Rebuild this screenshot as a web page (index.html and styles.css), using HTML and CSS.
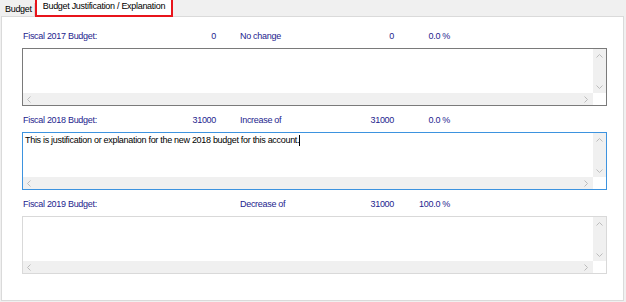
FILE: index.html
```html
<!DOCTYPE html>
<html lang="en">
<head>
  <meta charset="UTF-8" />
  <title>Budget Justification</title>
  <link rel="stylesheet" href="styles.css">
</head>
<body>
  <div class="tabs">
    <div class="tab">Budget</div>
    <div class="tab active">Budget Justification / Explanation</div>
  </div>

  <div class="panel">
    <div class="group">
      <div class="figures">
        <span>Fiscal 2017 Budget:</span>
        <span class="num">0</span>
        <span class="change">No change</span>
        <span class="num">0</span>
        <span class="num">0.0 %</span>
      </div>
      <div class="memo hover">
        <div class="memo-text"></div>
        <div class="vscroll">
          <svg width="7" height="4" viewBox="0 0 7 4"><path d="M0.5 3.5 L3.5 0.5 L6.5 3.5" fill="none" stroke="#bcbcbc"/></svg>
          <svg width="7" height="4" viewBox="0 0 7 4"><path d="M0.5 0.5 L3.5 3.5 L6.5 0.5" fill="none" stroke="#bcbcbc"/></svg>
        </div>
        <div class="hscroll">
          <svg width="4" height="7" viewBox="0 0 4 7"><path d="M3.5 0.5 L0.5 3.5 L3.5 6.5" fill="none" stroke="#bcbcbc"/></svg>
          <svg width="4" height="7" viewBox="0 0 4 7"><path d="M0.5 0.5 L3.5 3.5 L0.5 6.5" fill="none" stroke="#bcbcbc"/></svg>
        </div>
        <div class="corner"></div>
      </div>
    </div>

    <div class="group">
      <div class="figures">
        <span>Fiscal 2018 Budget:</span>
        <span class="num">31000</span>
        <span class="change">Increase of</span>
        <span class="num">31000</span>
        <span class="num">0.0 %</span>
      </div>
      <div class="memo focus">
        <div class="memo-text">This is justification or explanation for the new 2018 budget for this account.<span class="caret"></span></div>
        <div class="vscroll">
          <svg width="7" height="4" viewBox="0 0 7 4"><path d="M0.5 3.5 L3.5 0.5 L6.5 3.5" fill="none" stroke="#bcbcbc"/></svg>
          <svg width="7" height="4" viewBox="0 0 7 4"><path d="M0.5 0.5 L3.5 3.5 L6.5 0.5" fill="none" stroke="#bcbcbc"/></svg>
        </div>
        <div class="hscroll">
          <svg width="4" height="7" viewBox="0 0 4 7"><path d="M3.5 0.5 L0.5 3.5 L3.5 6.5" fill="none" stroke="#bcbcbc"/></svg>
          <svg width="4" height="7" viewBox="0 0 4 7"><path d="M0.5 0.5 L3.5 3.5 L0.5 6.5" fill="none" stroke="#bcbcbc"/></svg>
        </div>
        <div class="corner"></div>
      </div>
    </div>

    <div class="group">
      <div class="figures">
        <span>Fiscal 2019 Budget:</span>
        <span class="num"></span>
        <span class="change">Decrease of</span>
        <span class="num">31000</span>
        <span class="num">100.0 %</span>
      </div>
      <div class="memo">
        <div class="memo-text"></div>
        <div class="vscroll">
          <svg width="7" height="4" viewBox="0 0 7 4"><path d="M0.5 3.5 L3.5 0.5 L6.5 3.5" fill="none" stroke="#bcbcbc"/></svg>
          <svg width="7" height="4" viewBox="0 0 7 4"><path d="M0.5 0.5 L3.5 3.5 L6.5 0.5" fill="none" stroke="#bcbcbc"/></svg>
        </div>
        <div class="hscroll">
          <svg width="4" height="7" viewBox="0 0 4 7"><path d="M3.5 0.5 L0.5 3.5 L3.5 6.5" fill="none" stroke="#bcbcbc"/></svg>
          <svg width="4" height="7" viewBox="0 0 4 7"><path d="M0.5 0.5 L3.5 3.5 L0.5 6.5" fill="none" stroke="#bcbcbc"/></svg>
        </div>
        <div class="corner"></div>
      </div>
    </div>
  </div>
</body>
</html>
```

FILE: styles.css
```css
body {
  margin: 0;
  background: #f0f0f0;
  font-family: 'Liberation Sans', Arial, sans-serif;
  font-size: 9px;
  letter-spacing: -0.3px;
  color: #000;
}
.tabs {
  display: flex;
  align-items: flex-end;
  height: 16px;
}
.tab {
  height: 13px;
  line-height: 13px;
  padding: 0 2px 0 5px;
  border-right: 1px solid #d9d9d9;
  background: #f0f0f0;
}
.tab.active {
  height: 15px;
  line-height: 13px;
  margin-bottom: -1px;
  padding: 0 6px;
  border: 2px solid #e8141b;
  background: #fff;
  position: relative;
  z-index: 1;
}
.panel {
  margin: 0 2px 0 1px;
  height: 270px;
  padding: 13px 16px 0 20px;
  background: #fff;
  border: 1px solid #dadada;
}
.group {
  margin-bottom: 8px;
}
.figures {
  display: grid;
  grid-template-columns: 149px 44px 134px 44px 56px;
  height: 13px;
  line-height: 13px;
  margin-bottom: 5px;
  padding-left: 1px;
  color: #24248e;
}
.num {
  text-align: right;
}
.change {
  padding-left: 24px;
}
.memo {
  display: grid;
  grid-template-columns: 1fr 13px;
  grid-template-rows: 1fr 12px;
  height: 56px;
  border: 1px solid #d9d9d9;
  background: #fff;
}
.memo.hover {
  border-color: #7a7a7a;
}
.memo.focus {
  border-color: #3d93df;
}
.memo-text {
  padding: 2px 2px;
  line-height: 11px;
}
.caret {
  display: inline-block;
  width: 1px;
  height: 11px;
  background: #000;
  vertical-align: top;
}
.vscroll {
  display: flex;
  flex-direction: column;
  justify-content: space-between;
  align-items: center;
  padding: 5px 0 4px;
  background: #f0f0f0;
}
.hscroll {
  display: flex;
  justify-content: space-between;
  align-items: center;
  padding: 0 5px 0 4px;
  background: #f0f0f0;
}
.corner {
  background: #fff;
}
```
